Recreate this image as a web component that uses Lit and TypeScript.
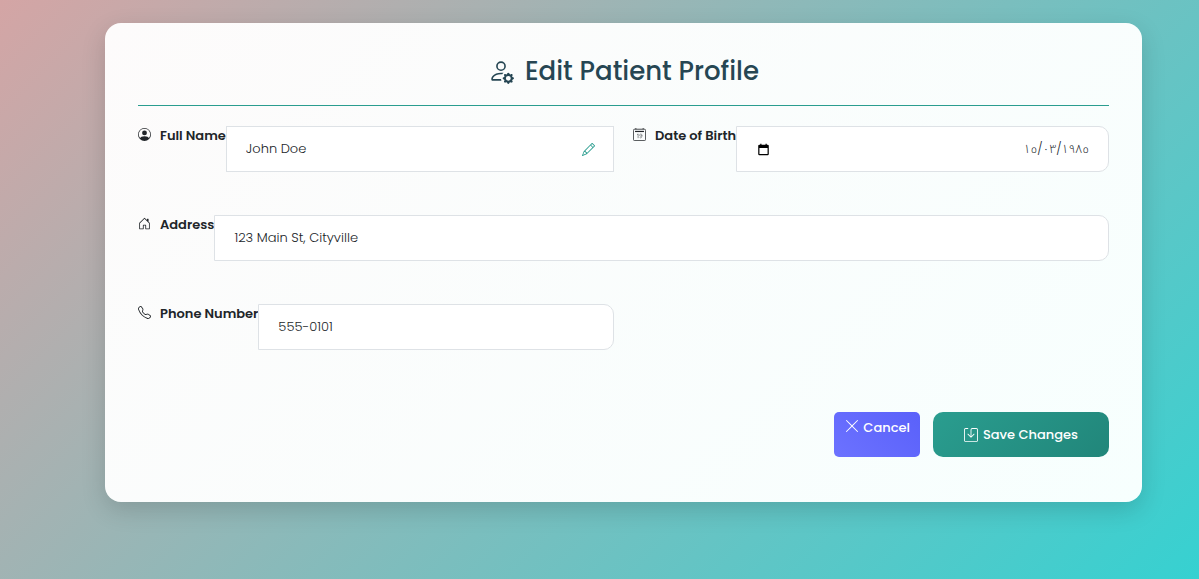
import { LitElement, html, css, svg } from "lit";
import { customElement } from "lit/decorators.js";

const icon = (body: unknown, cls = "icon") =>
  html`<svg class=${cls} viewBox="0 0 16 16" fill="currentColor" aria-hidden="true">${body}</svg>`;

const personGear = svg`<path d="M11 5a3 3 0 1 1-6 0 3 3 0 0 1 6 0M8 7a2 2 0 1 0 0-4 2 2 0 0 0 0 4m.256 7a4.5 4.5 0 0 1-.229-1.004H3c.001-.246.154-.986.832-1.664C4.484 10.68 5.711 10 8 10q.39 0 .74.025c.226-.341.496-.65.804-.918Q8.844 9.002 8 9c-5 0-6 3-6 4s1 1 1 1zm3.63-4.54c.18-.613 1.048-.613 1.229 0l.043.148a.64.64 0 0 0 .921.382l.136-.074c.561-.306 1.175.308.87.869l-.075.136a.64.64 0 0 0 .382.92l.149.045c.612.18.612 1.048 0 1.229l-.15.043a.64.64 0 0 0-.38.921l.074.136c.305.561-.309 1.175-.87.87l-.136-.075a.64.64 0 0 0-.92.382l-.045.149c-.18.612-1.048.612-1.229 0l-.043-.15a.64.64 0 0 0-.921-.38l-.136.074c-.561.305-1.175-.309-.87-.87l.075-.136a.64.64 0 0 0-.382-.92l-.148-.045c-.613-.18-.613-1.048 0-1.229l.148-.043a.64.64 0 0 0 .382-.921l-.074-.136c-.306-.561.308-1.175.869-.87l.136.075a.64.64 0 0 0 .92-.382zM14 12.5a1.5 1.5 0 1 0-3 0 1.5 1.5 0 0 0 3 0"/>`;
const personCircle = svg`<path d="M11 6a3 3 0 1 1-6 0 3 3 0 0 1 6 0"/><path fill-rule="evenodd" d="M0 8a8 8 0 1 1 16 0A8 8 0 0 1 0 8m8-7a7 7 0 0 0-5.468 11.37C3.242 11.226 4.805 10 8 10s4.757 1.225 5.468 2.37A7 7 0 0 0 8 1"/>`;
const calendarDate = svg`<g fill="none" stroke="currentColor"><path d="M2 1.500h12a1.500 1.500 0 0 1 1.500 1.500v11a1.500 1.500 0 0 1-1.500 1.500H2A1.500 1.500 0 0 1 .5 14V3A1.500 1.500 0 0 1 2 1.500z"/><path d="M3.500 0v1.500M12.500 0v1.500"/><path d="M5 8.200l1.300-.9v5.200" stroke-width=".6"/><circle cx="9.600" cy="8.800" r="1.400" stroke-width=".5"/><path d="M11 8.800c0 2.300-.4 3.400-1.500 3.400-.7 0-1.100-.3-1.300-.8" stroke-width=".5"/></g><path d="M2.500 3.500h11v1.500h-11z"/>`;
const houseDoor = svg`<path d="M8.354 1.146a.5.5 0 0 0-.708 0l-6 6A.5.5 0 0 0 1.500 7.500v7a.5.5 0 0 0 .5.5h4.500a.5.5 0 0 0 .5-.5v-4h2v4a.5.5 0 0 0 .5.5H14a.5.5 0 0 0 .5-.5v-7a.5.5 0 0 0-.146-.354L13 5.793V2.500a.5.5 0 0 0-.5-.5h-1a.5.5 0 0 0-.5.5v1.293zM2.500 14V7.707l5.500-5.500 5.500 5.500V14H10v-4a.5.5 0 0 0-.5-.5h-3a.5.5 0 0 0-.5.5v4z"/>`;
const telephone = svg`<path d="M3.654 1.328a.678.678 0 0 0-1.015-.063L1.605 2.300c-.483.484-.661 1.169-.45 1.770a17.600 17.600 0 0 0 4.168 6.608 17.600 17.600 0 0 0 6.608 4.168c.601.211 1.286.033 1.770-.45l1.034-1.034a.678.678 0 0 0-.063-1.015l-2.307-1.794a.68.68 0 0 0-.58-.122l-2.190.547a1.750 1.750 0 0 1-1.657-.459L5.482 8.062a1.750 1.750 0 0 1-.46-1.657l.548-2.190a.68.68 0 0 0-.122-.58zM1.884.511a1.745 1.745 0 0 1 2.612.163L6.290 2.980c.329.423.445.974.315 1.494l-.547 2.190a.68.68 0 0 0 .178.643l2.457 2.457a.68.68 0 0 0 .644.178l2.189-.547a1.750 1.750 0 0 1 1.494.315l2.306 1.794c.829.645.905 1.870.163 2.611l-1.034 1.034c-.74.74-1.846 1.065-2.877.702a18.600 18.600 0 0 1-7.010-4.420 18.600 18.600 0 0 1-4.420-7.009c-.362-1.030-.037-2.137.703-2.877z"/>`;
const pencil = svg`<path d="M12.146.146a.5.5 0 0 1 .708 0l3 3a.5.5 0 0 1 0 .708l-10 10a.5.5 0 0 1-.168.110l-5 2a.5.5 0 0 1-.65-.65l2-5a.5.5 0 0 1 .110-.168zM11.207 2.500 13.500 4.793 14.793 3.500 12.500 1.207zm1.586 3L10.500 3.207 4 9.707V10h.5a.5.5 0 0 1 .5.5v.5h.5a.5.5 0 0 1 .5.5v.5h.293zm-9.761 5.175-.106.106-1.528 3.821 3.821-1.528.106-.106A.5.5 0 0 1 5 12.500V12h-.5a.5.5 0 0 1-.5-.5V11h-.5a.5.5 0 0 1-.468-.325"/>`;
const calendarPicker = svg`<path fill-rule="evenodd" d="M4 1v1H3a1.500 1.500 0 0 0-1.500 1.500v10A1.500 1.500 0 0 0 3 15h10a1.500 1.500 0 0 0 1.500-1.500v-10A1.500 1.500 0 0 0 13 2h-1V1h-1.500v1h-5V1zM3 6h10v7.500H3z"/>`;
const cross = svg`<path d="M2.146 2.854a.5.5 0 1 1 .708-.708L8 7.293l5.146-5.147a.5.5 0 0 1 .708.708L8.707 8l5.147 5.146a.5.5 0 0 1-.708.708L8 8.707l-5.146 5.147a.5.5 0 0 1-.708-.708L7.293 8z"/>`;
const save = svg`<path d="M2 1a1 1 0 0 0-1 1v12a1 1 0 0 0 1 1h12a1 1 0 0 0 1-1V2a1 1 0 0 0-1-1H9.500a1 1 0 0 0-1 1v7.293l2.646-2.647a.5.5 0 0 1 .708.708l-3.500 3.500a.5.5 0 0 1-.708 0l-3.500-3.500a.5.5 0 1 1 .708-.708L7.500 9.293V2a2 2 0 0 1 2-2H14a2 2 0 0 1 2 2v12a2 2 0 0 1-2 2H2a2 2 0 0 1-2-2V2a2 2 0 0 1 2-2h2.500a.5.5 0 0 1 0 1z"/>`;

@customElement("app-root")
export class AppRoot extends LitElement {
  static styles = css`
    :host {
      display: block;
      box-sizing: border-box;
      min-height: 100vh;
      padding: 23px 57px 77px 105px;
      background: linear-gradient(135deg, #d4a5a5, #36d1d1);
      color: #212529;
      font-family: Poppins, Inter, "DejaVu Sans", sans-serif;
      font-size: 13px;
      line-height: 20px;
    }
    *,
    *::before {
      box-sizing: border-box;
    }
    .card {
      padding: 32px 33px 45px;
      border-radius: 16px;
      background: linear-gradient(135deg, #fdfbfb, #f7fffe);
      box-shadow: 0 8px 24px rgba(0, 0, 0, 0.15);
    }
    .title {
      display: flex;
      justify-content: center;
      align-items: center;
      gap: 11px;
      margin: 0 0 20px;
      padding-bottom: 18px;
      border-bottom: 1px solid #2a9d8f;
      color: #264653;
      font-size: 26px;
      font-weight: 500;
      line-height: 32px;
    }
    .title-icon {
      width: 26px;
      height: 26px;
    }
    .fields {
      display: grid;
      grid-template-columns: 1fr 1fr;
      column-gap: 19px;
      row-gap: 43px;
    }
    .field {
      display: flex;
      align-items: stretch;
      min-width: 0;
    }
    .wide {
      grid-column: 1 / -1;
    }
    .label {
      display: flex;
      align-items: flex-start;
      gap: 9px;
      flex: none;
      font-weight: 600;
      white-space: nowrap;
    }
    .icon {
      flex: none;
      width: 13px;
      height: 13px;
      margin-top: 2px;
    }
    .box {
      display: flex;
      align-items: center;
      flex: 1;
      min-width: 0;
      height: 46px;
      padding: 0 19px;
      border: 1px solid #dee2e6;
      border-radius: 0 10px 10px 0;
      background: #fff;
    }
    .square {
      padding-right: 18px;
      border-radius: 0;
    }
    .input {
      flex: 1;
      min-width: 0;
      width: 100%;
      padding: 0;
      border: 0;
      outline: 0;
      background: none;
      color: #212529;
      font: inherit;
      font-weight: 300;
    }
    .date {
      font-family: Poppins, "DejaVu Sans Light", "Noto Sans Arabic", sans-serif;
      font-size: 12px;
      text-align: right;
    }
    .icon-button {
      display: flex;
      padding: 0;
      border: 0;
      background: none;
      color: #2a9d8f;
      cursor: pointer;
    }
    .picker {
      margin-left: 1px;
      color: #000;
    }
    .glyph {
      width: 13px;
      height: 13px;
    }
    .actions {
      display: flex;
      justify-content: flex-end;
      gap: 13px;
      margin-top: 62px;
    }
    .button {
      display: flex;
      height: 45px;
      border: 0;
      color: #fff;
      font: inherit;
      font-weight: 500;
      cursor: pointer;
    }
    .cancel {
      align-items: flex-start;
      gap: 3px;
      padding: 6px 10px;
      border-radius: 5px;
      background: linear-gradient(45deg, #6c72ff, #5a61fa);
    }
    .cross {
      width: 16px;
      height: 16px;
    }
    .save {
      align-items: center;
      gap: 5px;
      padding: 0 31px;
      border-radius: 10px;
      background: linear-gradient(135deg, #2a9d8f, #21867a);
    }
    .disk {
      width: 14px;
      height: 14px;
    }
  `;

  private field(
    id: string,
    label: string,
    glyph: unknown,
    value: string,
    cls = "",
    boxCls = "",
    before: unknown = null,
    after: unknown = null,
  ) {
    return html`<div class="field ${cls}">
      <label class="label" for=${id}>${icon(glyph)}<span>${label}</span></label>
      <div class="box ${boxCls}">
        ${before}<input
          class="input ${id === "dob" ? "date" : ""}"
          id=${id}
          type=${id === "phone" ? "tel" : "text"}
          .value=${value}
        />${after}
      </div>
    </div>`;
  }

  render() {
    return html`<main class="card">
      <h1 class="title">${icon(personGear, "title-icon")}<span>Edit Patient Profile</span></h1>
      <form @submit=${(e: Event) => e.preventDefault()}>
        <div class="fields">
          ${this.field("name", "Full Name", personCircle, "John Doe", "", "square", null,
            html`<button class="icon-button" type="button" aria-label="Edit name">${icon(pencil, "glyph")}</button>`)}
          ${this.field("dob", "Date of Birth", calendarDate, "١٥/٠٣/١٩٨٥", "", "",
            html`<button class="icon-button picker" type="button" aria-label="Pick a date">${icon(calendarPicker, "glyph")}</button>`)}
          ${this.field("address", "Address", houseDoor, "123 Main St, Cityville", "wide")}
          ${this.field("phone", "Phone Number", telephone, "555-0101")}
        </div>
        <div class="actions">
          <button class="button cancel" type="button">${icon(cross, "cross")}<span>Cancel</span></button>
          <button class="button save" type="submit">${icon(save, "disk")}<span>Save Changes</span></button>
        </div>
      </form>
    </main>`;
  }
}
